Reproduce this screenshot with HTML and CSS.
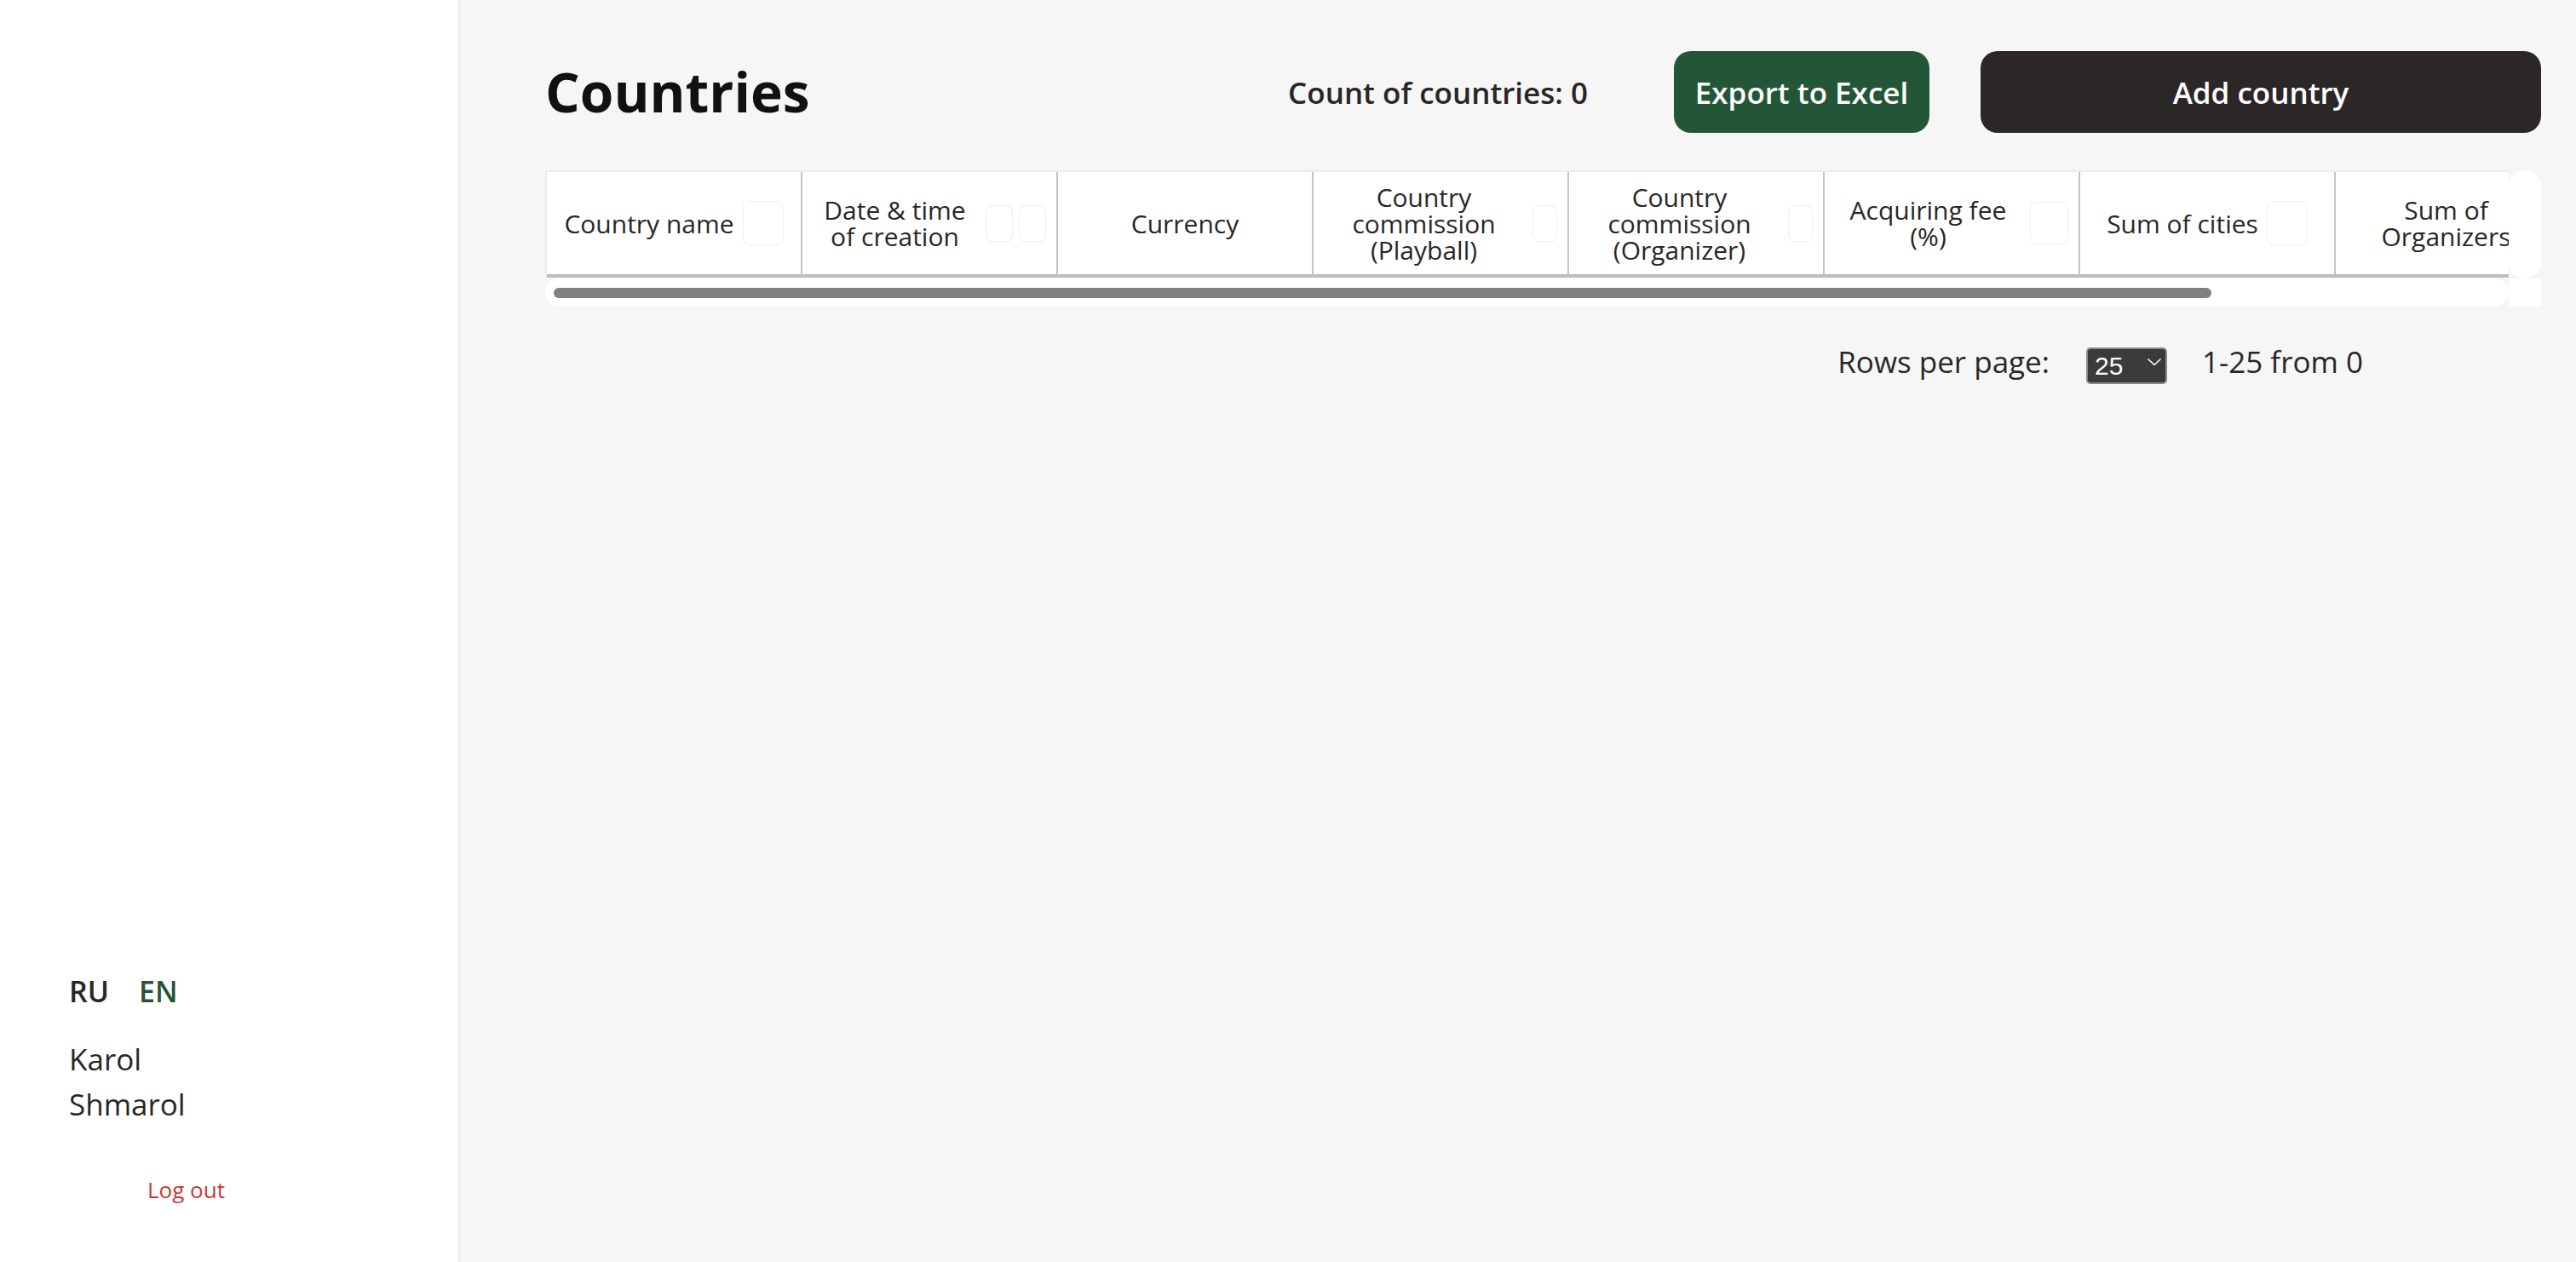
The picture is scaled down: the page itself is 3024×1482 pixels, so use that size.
FILE: index.html
```html
<!DOCTYPE html>
<html lang="en">
<head>
<meta charset="utf-8">
<title>Countries</title>
<link rel="stylesheet" href="styles.css">
</head>
<body>
<aside class="sidebar">
  <div class="lang">
    <span class="lang-item">RU</span>
    <span class="lang-item lang-active">EN</span>
  </div>
  <div class="user-name">Karol<br>Shmarol</div>
  <a class="logout" href="#">Log out</a>
</aside>
<main class="main">
  <header class="page-header">
    <h1 class="page-title">Countries</h1>
    <div class="count">Count of countries: 0</div>
    <button class="btn btn-export">Export to Excel</button>
    <button class="btn btn-add">Add country</button>
  </header>

  <div class="table-frame">
    <div class="table-viewport">
      <table class="data-table">
        <thead>
          <tr>
            <th><div class="th-inner"><span class="th-text">Country name</span><span class="sort sort-lg"></span></div></th>
            <th><div class="th-inner"><span class="th-text th-grow">Date &amp; time of creation</span><span class="sorts"><span class="sort sort-sm"></span><span class="sort sort-sm"></span></span></div></th>
            <th><div class="th-inner"><span class="th-text">Currency</span></div></th>
            <th><div class="th-inner"><span class="th-text th-grow">Country commission (Playball)</span><span class="sort sort-xs"></span></div></th>
            <th><div class="th-inner"><span class="th-text th-grow">Country commission (Organizer)</span><span class="sort sort-xs"></span></div></th>
            <th><div class="th-inner"><span class="th-text th-grow">Acquiring fee (%)</span><span class="sort sort-md"></span></div></th>
            <th><div class="th-inner"><span class="th-text">Sum of cities</span><span class="sort sort-lg"></span></div></th>
            <th><div class="th-inner"><span class="th-text th-grow">Sum of Organizers</span><span class="sort sort-xs"></span></div></th>
            <th><div class="th-inner"><span class="th-text">Actions</span></div></th>
          </tr>
        </thead>
      </table>
    </div>
    <div class="vtrack"></div>
    <div class="htrack"><div class="hthumb" style="width: 1946px"></div></div>
    <div class="corner"></div>
  </div>

  <div class="pagination">
    <span class="pg-label">Rows per page:</span>
    <span class="select-wrap">
      <select class="rows-select">
        <option>25</option>
        <option>50</option>
        <option>100</option>
      </select>
      <svg class="chevron" width="18" height="10" viewBox="0 0 18 10"><path d="M1.5 1.5 L9 8.5 L16.5 1.5" fill="none" stroke="#ffffff" stroke-width="1.6"/></svg>
    </span>
    <span class="pg-range">1-25 from 0</span>
  </div>
</main>
</body>
</html>
```

FILE: styles.css
```css
* { box-sizing: border-box; }

html, body {
  margin: 0;
  height: 100%;
}

body {
  display: flex;
  font-family: "Open Sans", "Liberation Sans", sans-serif;
  color: #2a2626;
  background: #f6f6f6;
  overflow: hidden;
}

/* Sidebar */
.sidebar {
  width: 540px;
  flex: 0 0 540px;
  height: 100vh;
  background: #ffffff;
  border-right: 2px solid #ebebeb;
  display: flex;
  flex-direction: column;
  justify-content: flex-end;
  padding: 0 0 67px 81px;
}

.lang {
  display: flex;
  gap: 35px;
  font-size: 34px;
  line-height: 40px;
  font-weight: 600;
}

.lang-active { color: #235636; }

.user-name {
  margin-top: 33px;
  font-size: 35px;
  line-height: 53px;
}

.logout {
  margin-top: 56px;
  margin-left: 92px;
  font-size: 26px;
  line-height: 36px;
  color: #c63a33;
  text-decoration: none;
}

/* Main */
.main {
  flex: 1;
  min-width: 0;
  padding: 60px 41px 0 100px;
}

.page-header {
  display: flex;
  align-items: center;
  height: 96px;
}

.page-title {
  margin: 0;
  font-size: 64px;
  font-weight: 700;
  line-height: 96px;
  color: #111;
}

.count {
  margin-left: auto;
  margin-right: 101px;
  font-size: 35px;
  font-weight: 600;
  color: #2a2626;
}

.btn {
  height: 96px;
  border: none;
  border-radius: 20px;
  font-family: "Open Sans", "Liberation Sans", sans-serif;
  font-size: 35px;
  font-weight: 600;
  color: #ffffff;
  padding: 0;
}

.btn-export {
  width: 300px;
  background: #235636;
}

.btn-add {
  width: 658px;
  margin-left: 60px;
  background: #2b2727;
}

/* Table with its scrollbars */
.table-frame {
  margin-top: 44px;
  display: grid;
  grid-template-columns: minmax(0, 1fr) 38px;
  grid-template-rows: 127px 33px;
}

.table-viewport {
  overflow: hidden;
}

.vtrack {
  background: #ffffff;
  border-radius: 19px;
}

.htrack {
  background: #ffffff;
  border-radius: 17px;
  padding: 11px 10px 10px;
}

.hthumb {
  height: 12px;
  border-radius: 6px;
  background: #808080;
}

.corner {
  background: #ffffff;
}

.data-table {
  border-collapse: separate;
  border-spacing: 0;
  table-layout: fixed;
  border-top: 2px solid #ececec;
  border-left: 2px solid #ececec;
}

.data-table th {
  width: 300px;
  min-width: 300px;
  max-width: 300px;
  height: 124px;
  padding: 0 12px;
  background: #ffffff;
  border-right: 2px solid #c4c4c4;
  border-bottom: 4px solid #bdbdbd;
  font-size: 30px;
  line-height: 31px;
  font-weight: 400;
  color: #2a2626;
  vertical-align: middle;
}

.th-inner {
  display: flex;
  align-items: center;
  justify-content: center;
  gap: 10px;
}

.th-text {
  text-align: center;
}

.th-grow {
  flex: 1 1 auto;
  min-width: 0;
}

.sorts {
  display: flex;
  gap: 7px;
  flex: 0 0 auto;
}

.sort {
  flex: 0 0 auto;
  display: block;
  background: #ffffff;
  border: 1px solid #eeeeee;
  border-radius: 8px;
}

.sort-lg { width: 48px; height: 52px; }
.sort-md { width: 45px; height: 50px; }
.sort-sm { width: 32px; height: 43px; }
.sort-xs { width: 29px; height: 43px; }

/* Pagination */
.pagination {
  margin-top: 43px;
  height: 43px;
  display: flex;
  align-items: center;
  justify-content: flex-end;
  padding-right: 209px;
  font-size: 35px;
  color: #2a2626;
}

.select-wrap {
  position: relative;
  margin: 0 41px 0 43px;
  display: block;
  height: 43px;
}

.rows-select {
  -webkit-appearance: none;
  appearance: none;
  width: 95px;
  height: 43px;
  padding: 0 0 0 8px;
  background: #3b3b3b;
  color: #ffffff;
  border: 2px solid #8a8a8a;
  border-radius: 5px;
  font-family: "Liberation Sans", Arial, sans-serif;
  font-size: 30px;
  line-height: 39px;
}

.chevron {
  position: absolute;
  left: 71px;
  top: 17px;
  pointer-events: none;
}
```
